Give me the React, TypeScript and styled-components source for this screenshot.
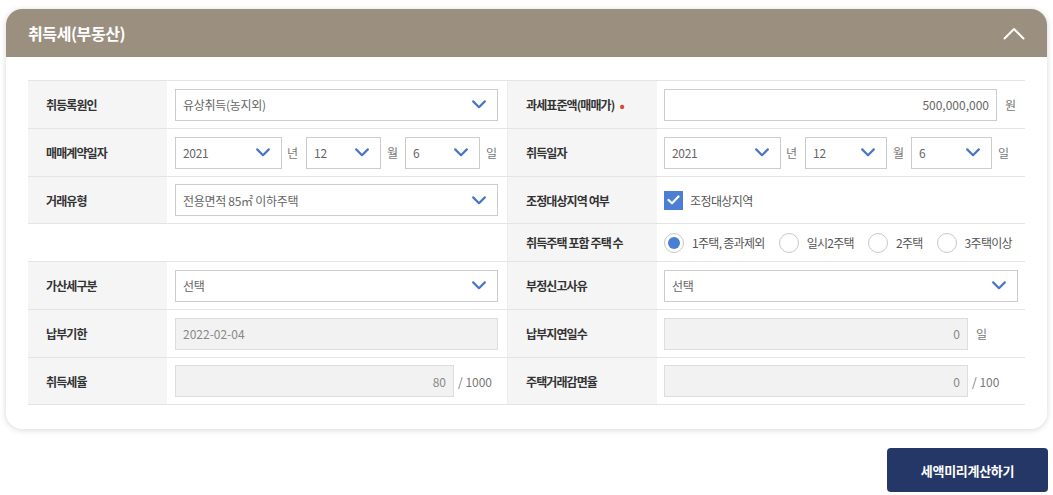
import React from "react";
import styled, { createGlobalStyle } from "styled-components";

const GlobalStyle = createGlobalStyle`
  html, body { margin: 0; padding: 0; background: #ffffff; }
  body {
    font-family: "Noto Sans CJK KR", "Noto Sans", sans-serif;
    color: #333;
    -webkit-font-smoothing: antialiased;
  }
  * { box-sizing: border-box; }
`;

const Page = styled.div`
  padding: 9px 6px 0 6px;
  width: 1053px;
`;

const Card = styled.section`
  background: #fff;
  border-radius: 16px;
  overflow: hidden;
  box-shadow: 0 1px 6px rgba(0, 0, 0, 0.16);
`;

const CardHeader = styled.header`
  height: 48px;
  background: #9b907f;
  display: flex;
  align-items: center;
  justify-content: space-between;
  padding: 0 22px;
`;

const Title = styled.h2`
  margin: 0;
  font-size: 16px;
  font-weight: 700;
  color: #fff;
  letter-spacing: -0.4px;
`;

const CollapseButton = styled.button`
  border: 0;
  background: transparent;
  padding: 0;
  width: 22px;
  height: 14px;
  display: flex;
  align-items: center;
  justify-content: center;
  cursor: pointer;
`;

const CardBody = styled.div`
  padding: 23px 22px 24px;
`;

const Table = styled.div`
  border-top: 1px solid #e4e4e4;
`;

const Row = styled.div<{ $h: number }>`
  display: grid;
  grid-template-columns: 139px 340px 150px 368px;
  height: ${(p) => p.$h}px;
  border-bottom: 1px solid #e4e4e4;
`;

const Label = styled.div<{ $empty?: boolean; $right?: boolean }>`
  background: ${(p) => (p.$empty ? "#fff" : "#f5f5f5")};
  border-left: ${(p) => (p.$right ? "1px solid #ececec" : "0")};
  display: flex;
  align-items: center;
  padding-left: ${(p) => (p.$right ? 18 : 18)}px;
  font-size: 12px;
  font-weight: 700;
  color: #333;
  letter-spacing: -0.9px;
  white-space: nowrap;
`;

const Required = styled.span`
  color: #e0462f;
  margin-left: 5px;
  font-size: 14px;
  line-height: 1;
`;

const Value = styled.div<{ $pl: number }>`
  display: flex;
  align-items: center;
  padding-left: ${(p) => p.$pl}px;
  white-space: nowrap;
`;

const SelectBox = styled.div<{ $w: number }>`
  width: ${(p) => p.$w}px;
  height: 32px;
  border: 1px solid #cccccc;
  background: #fff;
  display: flex;
  align-items: center;
  justify-content: space-between;
  padding: 0 11px 0 7px;
  font-size: 12px;
  color: #666;
  letter-spacing: -0.3px;
  flex-shrink: 0;
`;

const InputBox = styled.div<{ $w: number; $readonly?: boolean; $align?: "left" | "right" }>`
  width: ${(p) => p.$w}px;
  height: 32px;
  border: 1px solid ${(p) => (p.$readonly ? "#dddddd" : "#cccccc")};
  background: ${(p) => (p.$readonly ? "#f2f2f2" : "#fff")};
  display: flex;
  align-items: center;
  justify-content: ${(p) => (p.$align === "left" ? "flex-start" : "flex-end")};
  padding: 0 7px;
  font-size: 12px;
  color: ${(p) => (p.$readonly ? "#888" : "#666")};
  flex-shrink: 0;
`;

const Unit = styled.span<{ $ml?: number; $mr?: number }>`
  font-size: 12px;
  color: #777;
  margin-left: ${(p) => p.$ml ?? 5}px;
  margin-right: ${(p) => p.$mr ?? 0}px;
`;

const CheckLabel = styled.label`
  display: flex;
  align-items: center;
  gap: 7px;
  font-size: 12px;
  color: #555;
  letter-spacing: -0.6px;
`;

const CheckBox = styled.span`
  width: 19px;
  height: 19px;
  background: #4a7fd4;
  display: flex;
  align-items: center;
  justify-content: center;
`;

const RadioGroup = styled.div`
  display: flex;
  align-items: center;
  gap: 14px;
`;

const RadioItem = styled.label`
  display: flex;
  align-items: center;
  gap: 8px;
  font-size: 12px;
  color: #555;
  letter-spacing: -0.7px;
`;

const RadioCircle = styled.span<{ $on?: boolean }>`
  width: 20px;
  height: 20px;
  border-radius: 50%;
  border: 1px solid #c8c8c8;
  background: #fff;
  display: flex;
  align-items: center;
  justify-content: center;
  &::after {
    content: "";
    width: 12px;
    height: 12px;
    border-radius: 50%;
    background: ${(p) => (p.$on ? "#4a7fd4" : "transparent")};
  }
`;

const Actions = styled.div`
  display: flex;
  justify-content: flex-end;
  padding: 19px 0 0;
  margin-right: -1px;
`;

const PrimaryButton = styled.button`
  width: 161px;
  height: 44px;
  border: 0;
  border-radius: 4px;
  background: #253766;
  color: #fff;
  font-family: inherit;
  font-size: 13px;
  font-weight: 700;
  letter-spacing: -0.3px;
  cursor: pointer;
`;

const Chevron = () => (
  <svg width="14" height="9" viewBox="0 0 14 9" fill="none">
    <path d="M1.2 1.4 L7 7.2 L12.8 1.4" stroke="#4a77c4" strokeWidth="2.2" strokeLinecap="round" strokeLinejoin="round" />
  </svg>
);

const Select = ({ w, text }: { w: number; text: string }) => (
  <SelectBox $w={w}>
    <span>{text}</span>
    <Chevron />
  </SelectBox>
);

const DateGroup = ({ widths }: { widths: [number, number, number] }) => (
  <>
    <Select w={widths[0]} text="2021" />
    <Unit $ml={5} $mr={8}>년</Unit>
    <Select w={widths[1]} text="12" />
    <Unit $ml={6} $mr={7}>월</Unit>
    <Select w={widths[2]} text="6" />
    <Unit $ml={6}>일</Unit>
  </>
);

export default function App() {
  return (
    <>
      <GlobalStyle />
      <Page>
        <Card>
          <CardHeader>
            <Title>취득세(부동산)</Title>
            <CollapseButton aria-label="접기">
              <svg width="22" height="13" viewBox="0 0 22 13" fill="none">
                <path d="M1.5 11.5 L11 2 L20.5 11.5" stroke="#fff" strokeWidth="2" strokeLinecap="round" strokeLinejoin="round" />
              </svg>
            </CollapseButton>
          </CardHeader>
          <CardBody>
            <Table>
              <Row $h={48}>
                <Label>취등록원인</Label>
                <Value $pl={8}>
                  <Select w={323} text="유상취득(농지외)" />
                </Value>
                <Label $right>
                  과세표준액(매매가)<Required>•</Required>
                </Label>
                <Value $pl={7}>
                  <InputBox $w={333}>500,000,000</InputBox>
                  <Unit $ml={8}>원</Unit>
                </Value>
              </Row>
              <Row $h={48}>
                <Label>매매계약일자</Label>
                <Value $pl={8}>
                  <DateGroup widths={[107, 75, 75]} />
                </Value>
                <Label $right>취득일자</Label>
                <Value $pl={7}>
                  <DateGroup widths={[117, 82, 81]} />
                </Value>
              </Row>
              <Row $h={47}>
                <Label>거래유형</Label>
                <Value $pl={8}>
                  <Select w={323} text="전용면적 85㎡ 이하주택" />
                </Value>
                <Label $right>조정대상지역 여부</Label>
                <Value $pl={7}>
                  <CheckLabel>
                    <CheckBox>
                      <svg width="13" height="10" viewBox="0 0 13 10" fill="none">
                        <path d="M1.5 5 L5 8.3 L11.5 1.5" stroke="#fff" strokeWidth="2.2" strokeLinecap="round" strokeLinejoin="round" />
                      </svg>
                    </CheckBox>
                    조정대상지역
                  </CheckLabel>
                </Value>
              </Row>
              <Row $h={38}>
                <Label $empty />
                <Value $pl={8} />
                <Label $right>취득주택 포함 주택 수</Label>
                <Value $pl={7}>
                  <RadioGroup>
                    <RadioItem>
                      <RadioCircle $on />
                      1주택, 종과제외
                    </RadioItem>
                    <RadioItem>
                      <RadioCircle />
                      일시2주택
                    </RadioItem>
                    <RadioItem>
                      <RadioCircle />
                      2주택
                    </RadioItem>
                    <RadioItem>
                      <RadioCircle />
                      3주택이상
                    </RadioItem>
                  </RadioGroup>
                </Value>
              </Row>
              <Row $h={48}>
                <Label>가산세구분</Label>
                <Value $pl={8}>
                  <Select w={323} text="선택" />
                </Value>
                <Label $right>부정신고사유</Label>
                <Value $pl={7}>
                  <Select w={354} text="선택" />
                </Value>
              </Row>
              <Row $h={48}>
                <Label>납부기한</Label>
                <Value $pl={8}>
                  <InputBox $w={323} $readonly $align="left">2022-02-04</InputBox>
                </Value>
                <Label $right>납부지연일수</Label>
                <Value $pl={7}>
                  <InputBox $w={304} $readonly>0</InputBox>
                  <Unit $ml={8}>일</Unit>
                </Value>
              </Row>
              <Row $h={47}>
                <Label>취득세율</Label>
                <Value $pl={8}>
                  <InputBox $w={279} $readonly>80</InputBox>
                  <Unit $ml={4}>/ 1000</Unit>
                </Value>
                <Label $right>주택거래감면율</Label>
                <Value $pl={7}>
                  <InputBox $w={304} $readonly>0</InputBox>
                  <Unit $ml={4}>/ 100</Unit>
                </Value>
              </Row>
            </Table>
          </CardBody>
        </Card>
        <Actions>
          <PrimaryButton>세액미리계산하기</PrimaryButton>
        </Actions>
      </Page>
    </>
  );
}
